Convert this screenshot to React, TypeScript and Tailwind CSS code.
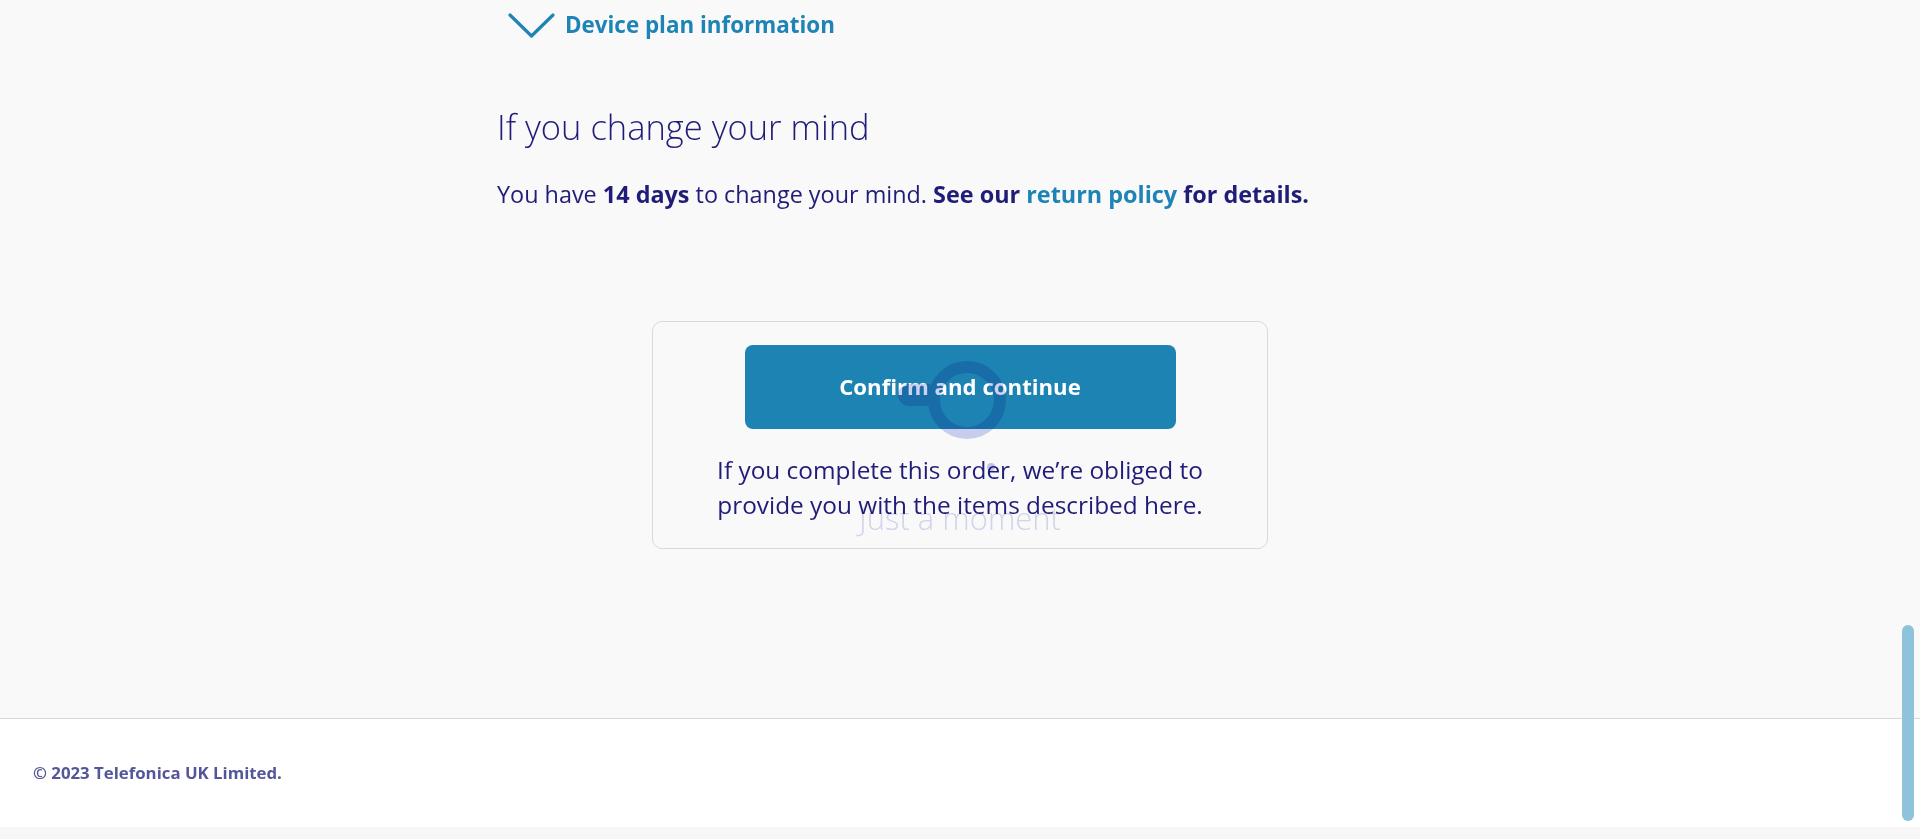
import React from "react";

function Chevron() {
  return (
    <svg width="47" height="26" viewBox="0 0 47 26" fill="none" className="shrink-0">
      <polyline points="2,3 23.5,24 45,3" stroke="#1d84b5" strokeWidth="3.2" strokeLinecap="round" strokeLinejoin="round" />
    </svg>
  );
}

function Spinner() {
  return (
    <svg
      width="130"
      height="130"
      viewBox="0 0 130 130"
      className="absolute left-[234px] top-[20px] mix-blend-multiply pointer-events-none"
    >
      <circle cx="80" cy="58" r="33" stroke="#cdd2f1" strokeWidth="12" fill="none" />
      <rect x="11" y="42" width="40" height="22" rx="11" fill="#cdd2f1" />
      <circle cx="104" cy="125" r="4" fill="#c4c9ee" />
    </svg>
  );
}

export default function App() {
  return (
    <div className="relative min-h-[839px] bg-[#f9f9f9] font-['Open_Sans',sans-serif] text-[#201d78]">
      <main className="mx-auto h-[718px] w-[926px]">
        <div className="flex h-[49px] items-center gap-[10px] pl-[11px]">
          <Chevron />
          <span className="text-[22.4px] font-bold text-[#1d84b5]">Device plan information</span>
        </div>
        <h2 className="mt-[57px] h-[42px] text-[34.5px] font-light leading-[42px]">If you change your mind</h2>
        <p className="mt-[31px] h-[30px] text-[23.4px] leading-[30px]">
          You have <b className="font-bold">14 days</b> to change your mind.{" "}
          <b className="font-bold">See our</b>{" "}
          <a className="font-bold text-[#1d84b5]">return policy</a>{" "}
          <b className="font-bold">for details.</b>
        </p>
        <div className="mt-[112px] flex justify-center">
          <div className="relative flex w-[616px] flex-col items-center rounded-[10px] border border-[#d9d9d9] bg-[#f9f9f9] pt-[23px] pb-[26px]">
            <button className="flex h-[84px] w-[431px] items-center justify-center rounded-[8px] bg-[#1d83b2] text-[22.2px] font-bold text-white">
              Confirm and continue
            </button>
            <p className="mt-[23px] text-center text-[24.4px] leading-[35px]">
              If you complete this order, we’re obliged to
              <br />
              provide you with the items described here.
            </p>
            <Spinner />
            <div className="pointer-events-none absolute left-0 right-0 top-[176px] text-center text-[31px] font-light leading-[40px] text-[#d6d9f0] mix-blend-multiply blur-[0.6px]">
              Just a moment
            </div>
          </div>
        </div>
      </main>
      <footer className="flex h-[109px] items-center border-t border-[#d6d6d6] bg-white pl-[33px]">
        <span className="text-[16.8px] font-bold text-[#55559a]">© 2023 Telefonica UK Limited.</span>
      </footer>
      <div className="h-[12px] bg-[#f7f7f7]" />
      <div className="absolute right-[6px] top-[625px] h-[196px] w-[12px] rounded-full bg-[#8fc3dc]" />
    </div>
  );
}
